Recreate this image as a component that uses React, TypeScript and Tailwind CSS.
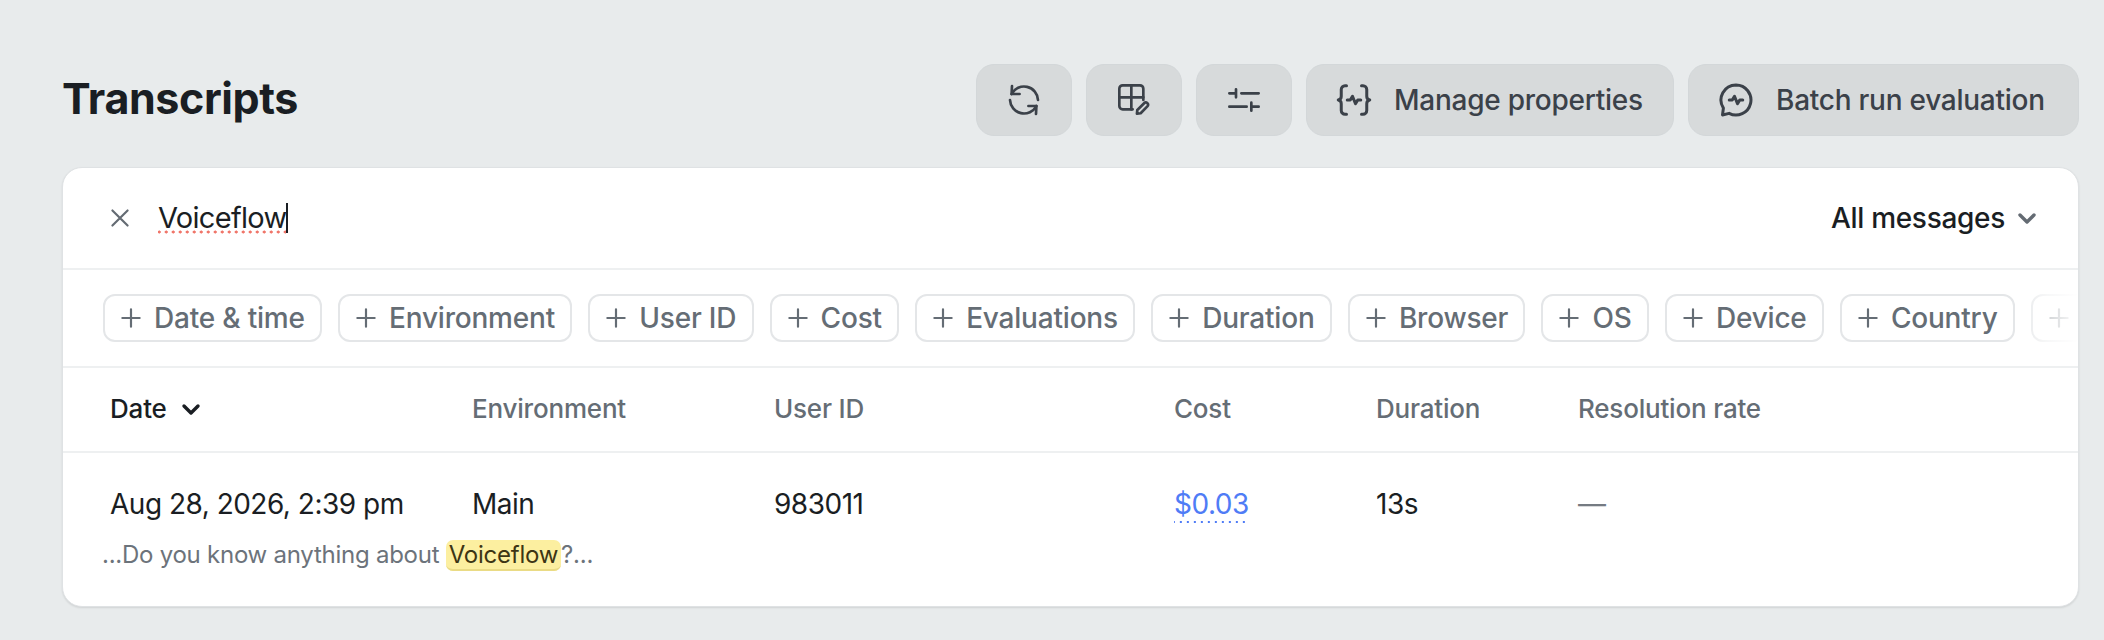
import type { ReactNode } from 'react'

const CHIPS = ['Date & time', 'Environment', 'User ID', 'Cost', 'Evaluations', 'Duration', 'Browser', 'OS', 'Device', 'Country']

function Icon({ children, className }: { children: ReactNode; className?: string }) {
  return (
    <svg
      viewBox="0 0 24 24"
      fill="none"
      stroke="currentColor"
      strokeWidth="2"
      strokeLinecap="round"
      strokeLinejoin="round"
      className={className}
      aria-hidden="true"
    >
      {children}
    </svg>
  )
}

function IconButton({ children }: { children: ReactNode }) {
  return (
    <button className="flex h-[72px] w-[96px] items-center justify-center rounded-[18px] border border-[#d3d7d9] bg-[#d7dadb] text-[#3b4149]">
      {children}
    </button>
  )
}

function TextButton({ icon, label, width }: { icon: ReactNode; label: string; width: string }) {
  return (
    <button className={`flex h-[72px] items-center gap-[22px] rounded-[18px] border border-[#d3d7d9] bg-[#d7dadb] pl-[29px] text-[28px] font-medium tracking-[-0.25px] text-[#3b4149] ${width}`}>
      {icon}
      {label}
    </button>
  )
}

function Chevron({ className }: { className: string }) {
  return (
    <Icon className={className}>
      <path d="M5 9l7 7 7-7" strokeWidth="3.4" />
    </Icon>
  )
}

function Plus() {
  return (
    <Icon className="h-[26px] w-[26px] shrink-0">
      <path d="M12 4v16M4 12h16" />
    </Icon>
  )
}

export default function App() {
  return (
    <div className="h-[640px] w-[2104px] overflow-hidden bg-[#e8ebec] pl-[62px] pr-[25px] pt-[64px] font-['Inter',sans-serif]">
      {/* Header */}
      <div className="flex h-[72px] items-center justify-between">
        <h1 className="mb-[4px] text-[43px] font-bold tracking-[-0.4px] text-[#1a1e23]">Transcripts</h1>
        <div className="flex gap-[14px]">
          <IconButton>
            <Icon className="h-8 w-8">
              <path d="M2.7 7.5A10.5 10.5 0 0 1 22.5 12" />
              <path d="M21.3 16.5A10.5 10.5 0 0 1 1.5 12" />
              <path d="M3 1.5 2.7 7.5 8.7 7.5" />
              <path d="M21 22.5 21.3 16.5 15.3 16.5" />
            </Icon>
          </IconButton>
          <IconButton>
            <Icon className="h-8 w-8">
              <path d="M11 19H3.5A2.5 2.5 0 0 1 1 16.5v-13A2.5 2.5 0 0 1 3.5 1h13A2.5 2.5 0 0 1 19 3.5V12" />
              <path d="M10 1v18M1 10h18" />
              <path d="M14.5 19.5l5.3-5.3a1.4 1.4 0 0 1 2 0l.4.4a1.4 1.4 0 0 1 0 2L17 21.9l-2.8.4z" />
            </Icon>
          </IconButton>
          <IconButton>
            <Icon className="h-8 w-8">
              <path d="M1 7h5M6 4v6M10 7h13" />
              <path d="M1 17h13M17.5 14v6M17.5 17H23" />
            </Icon>
          </IconButton>
          <TextButton
            width="w-[368px]"
            label="Manage properties"
            icon={
              <Icon className="h-9 w-9 shrink-0">
                <path d="M7 2.5H6A2.5 2.5 0 0 0 3.5 5v4.5A2.5 2.5 0 0 1 1.5 12a2.5 2.5 0 0 1 2 2.5V19A2.5 2.5 0 0 0 6 21.5h1" />
                <path d="M17 2.5h1A2.5 2.5 0 0 1 20.5 5v4.5a2.5 2.5 0 0 0 2 2.5 2.5 2.5 0 0 0-2 2.5V19a2.5 2.5 0 0 1-2.5 2.5h-1" />
                <path d="M7.5 12h2l1.5-2.5 2 5 1.5-2.5h2" />
              </Icon>
            }
          />
          <TextButton
            width="w-[391px]"
            label="Batch run evaluation"
            icon={
              <Icon className="h-9 w-9 shrink-0">
                <path d="M12 2a10 10 0 1 1-4.6 18.9L3 22l.6-4.6A10 10 0 0 1 12 2z" />
                <path d="M7.5 12h2l1.5-2.5 2 5 1.5-2.5h2" />
              </Icon>
            }
          />
        </div>
      </div>

      {/* Card */}
      <div className="mt-[31px] h-[440px] overflow-hidden rounded-[20px] border border-[#dfe2e4] bg-white shadow-[0_1px_2px_rgba(0,0,0,0.1)]">
        {/* Search */}
        <div className="flex h-[102px] items-center justify-between border-b-2 border-[#eef0f1] pl-[44px] pr-[39px]">
          <div className="flex items-center gap-[25px]">
            <Icon className="h-[26px] w-[26px] text-[#646b73]">
              <path d="M5 5l14 14M19 5 5 19" />
            </Icon>
            <div className="flex items-center text-[29px] tracking-[-0.7px] text-[#1a1e23]">
              <span className="bg-[radial-gradient(circle,#f0766a_1.4px,transparent_1.7px)] bg-[length:7px_4px] bg-bottom bg-repeat-x leading-[32px]">Voiceflow</span>
              <span className="h-[30px] w-[2px] bg-[#1a1e23]" />
            </div>
          </div>
          <div className="flex items-center gap-[10px] text-[28px] font-medium tracking-[-0.3px] text-[#1a1e23]">
            All messages
            <Chevron className="h-[24px] w-[24px] text-[#646b73]" />
          </div>
        </div>

        {/* Filter chips */}
        <div className="relative flex h-[98px] items-center gap-[16px] overflow-hidden border-b-2 border-[#eef0f1] pl-[40px]">
          {CHIPS.map((chip) => (
            <div
              key={chip}
              className="flex h-[48px] shrink-0 items-center gap-[10px] rounded-[12px] border-2 border-[#e4e6e8] pl-[13px] pr-[15.3px] text-[28px] font-medium tracking-[-0.2px] text-[#656d75]"
            >
              <Plus />
              {chip}
            </div>
          ))}
          <div className="flex h-[48px] w-[90px] shrink-0 items-center rounded-[12px] border-2 border-[#e4e6e8] pl-[13px] text-[#656d75]">
            <Plus />
          </div>
          <div className="absolute inset-y-0 right-0 w-[62px] bg-gradient-to-r from-white/0 via-white/70 to-white" />
        </div>

        {/* Table head */}
        <div className="grid h-[85px] grid-cols-[362px_302px_400px_202px_202px_1fr] items-center border-b-2 border-[#eef0f1] pb-[2px] pl-[47px] text-[26px] font-medium tracking-[-0.2px] text-[#656d75]">
          <div className="flex items-center gap-[12px] text-[#1a1e23]">
            Date
            <Chevron className="h-[24px] w-[24px] text-[#1a1e23]" />
          </div>
          <div>Environment</div>
          <div>User ID</div>
          <div>Cost</div>
          <div>Duration</div>
          <div>Resolution rate</div>
        </div>

        {/* Row */}
        <div className="grid grid-cols-[362px_302px_400px_202px_202px_1fr] items-center pl-[47px] pt-[30px] text-[28px] tracking-[-0.5px] text-[#1a1e23]">
          <div>Aug 28, 2026, 2:39 pm</div>
          <div>Main</div>
          <div>983011</div>
          <div>
            <span className="bg-[linear-gradient(to_right,#4f7cf6_2px,transparent_2px)] bg-[length:7px_2px] bg-bottom bg-repeat-x pb-[2px] text-[#4f7cf6]">$0.03</span>
          </div>
          <div>13s</div>
          <div className="text-[#757b82]">—</div>
        </div>
        <div className="mt-[12px] pl-[39px] text-[24px] tracking-[-0.25px] text-[#6c737b]">
          ...Do you know anything about{' '}
          <span className="rounded-[7px] border-b-2 border-[#eadb85] bg-[#fcefa0] px-[3px] text-[#3d3514]">Voiceflow</span>
          ?...
        </div>
      </div>
    </div>
  )
}
